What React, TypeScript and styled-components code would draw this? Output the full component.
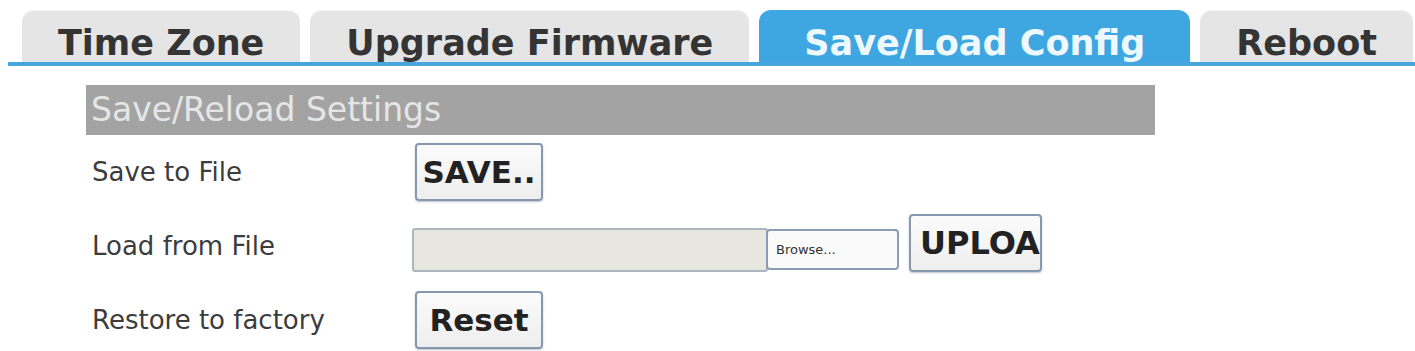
import React from 'react';
import styled, { createGlobalStyle } from 'styled-components';

const GlobalStyle = createGlobalStyle`
  html, body {
    margin: 0;
    padding: 0;
    background: #fff;
  }

  body {
    font-family: "DejaVu Sans", Verdana, sans-serif;
  }
`;

const Page = styled.div`
  width: 1415px;
  height: 351px;
  overflow: hidden;
  padding-top: 10px;
  box-sizing: border-box;
`;

const TabBar = styled.div`
  display: flex;
  align-items: flex-end;
  gap: 10px;
  margin-left: 8px;
  padding-left: 14px;
  border-bottom: 4px solid #46a6dd;
`;

const Tab = styled.div<{ $active?: boolean }>`
  height: 52px;
  line-height: 66px;
  overflow: hidden;
  padding: 0 ${p => (p.$active ? 45 : 36)}px;
  border-radius: 12px 12px 0 0;
  background: ${p => (p.$active ? '#3ea6e1' : '#e5e5e5')};
  color: ${p => (p.$active ? '#eef8ff' : '#343434')};
  font-size: 35px;
  font-weight: bold;
  white-space: nowrap;
  box-shadow: ${p => (p.$active ? 'none' : 'inset 0 1px #f3f3f3')};
`;

const Content = styled.div`
  padding: 19px 0 0 86px;
`;

const SectionHeader = styled.div`
  width: 1069px;
  height: 50px;
  line-height: 50px;
  padding-left: 5px;
  box-sizing: border-box;
  background: #a3a3a3;
  color: #e6e6e6;
  font-size: 33px;
`;

const Row = styled.div`
  display: flex;
  align-items: center;
  height: 74px;
`;

const Label = styled.div`
  width: 326px;
  padding-left: 6px;
  box-sizing: border-box;
  color: #3c3c3c;
  font-size: 26px;
`;

const Button = styled.button<{ $width?: number }>`
  width: ${p => p.$width ?? 128}px;
  height: 58px;
  margin-left: 3px;
  padding: 0;
  border: 2px solid #8598ae;
  border-radius: 4px;
  background: linear-gradient(#fbfbfb, #eeeeee);
  box-shadow: 0 1px 2px rgba(60, 80, 110, 0.35);
  color: #222;
  font: bold 31px "DejaVu Sans", Verdana, sans-serif;
  cursor: pointer;
`;

const ClipButton = styled(Button)`
  overflow: hidden;
  white-space: nowrap;
  text-align: left;
  padding-left: 9px;
  margin-left: 10px;
  font-size: 32px;
`;

const FileGroup = styled.div`
  display: flex;
  align-items: flex-end;
  padding-bottom: 6px;
`;

const FileField = styled.input`
  width: 356px;
  height: 44px;
  box-sizing: border-box;
  border: 2px solid #adb6bf;
  border-radius: 3px;
  background: #e7e7e0;
  margin: 0;
`;

const BrowseButton = styled.button`
  width: 133px;
  height: 41px;
  margin: 0 0 2px -2px;
  border: 2px solid #8a9db2;
  border-radius: 4px;
  background: #fafafa;
  color: #333;
  font: 13px "DejaVu Sans", Verdana, sans-serif;
  text-align: left;
  padding-left: 8px;
`;

export default function App() {
  return (
    <Page>
      <GlobalStyle />
      <TabBar>
        <Tab>Time Zone</Tab>
        <Tab>Upgrade Firmware</Tab>
        <Tab $active>Save/Load Config</Tab>
        <Tab>Reboot</Tab>
      </TabBar>
      <Content>
        <SectionHeader>Save/Reload Settings</SectionHeader>
        <Row>
          <Label>Save to File</Label>
          <Button>SAVE..</Button>
        </Row>
        <Row>
          <Label>Load from File</Label>
          <FileGroup>
            <FileField type="text" readOnly />
            <BrowseButton>Browse...</BrowseButton>
            <ClipButton $width={133}>UPLOAD</ClipButton>
          </FileGroup>
        </Row>
        <Row>
          <Label>Restore to factory</Label>
          <Button>Reset</Button>
        </Row>
      </Content>
    </Page>
  );
}
